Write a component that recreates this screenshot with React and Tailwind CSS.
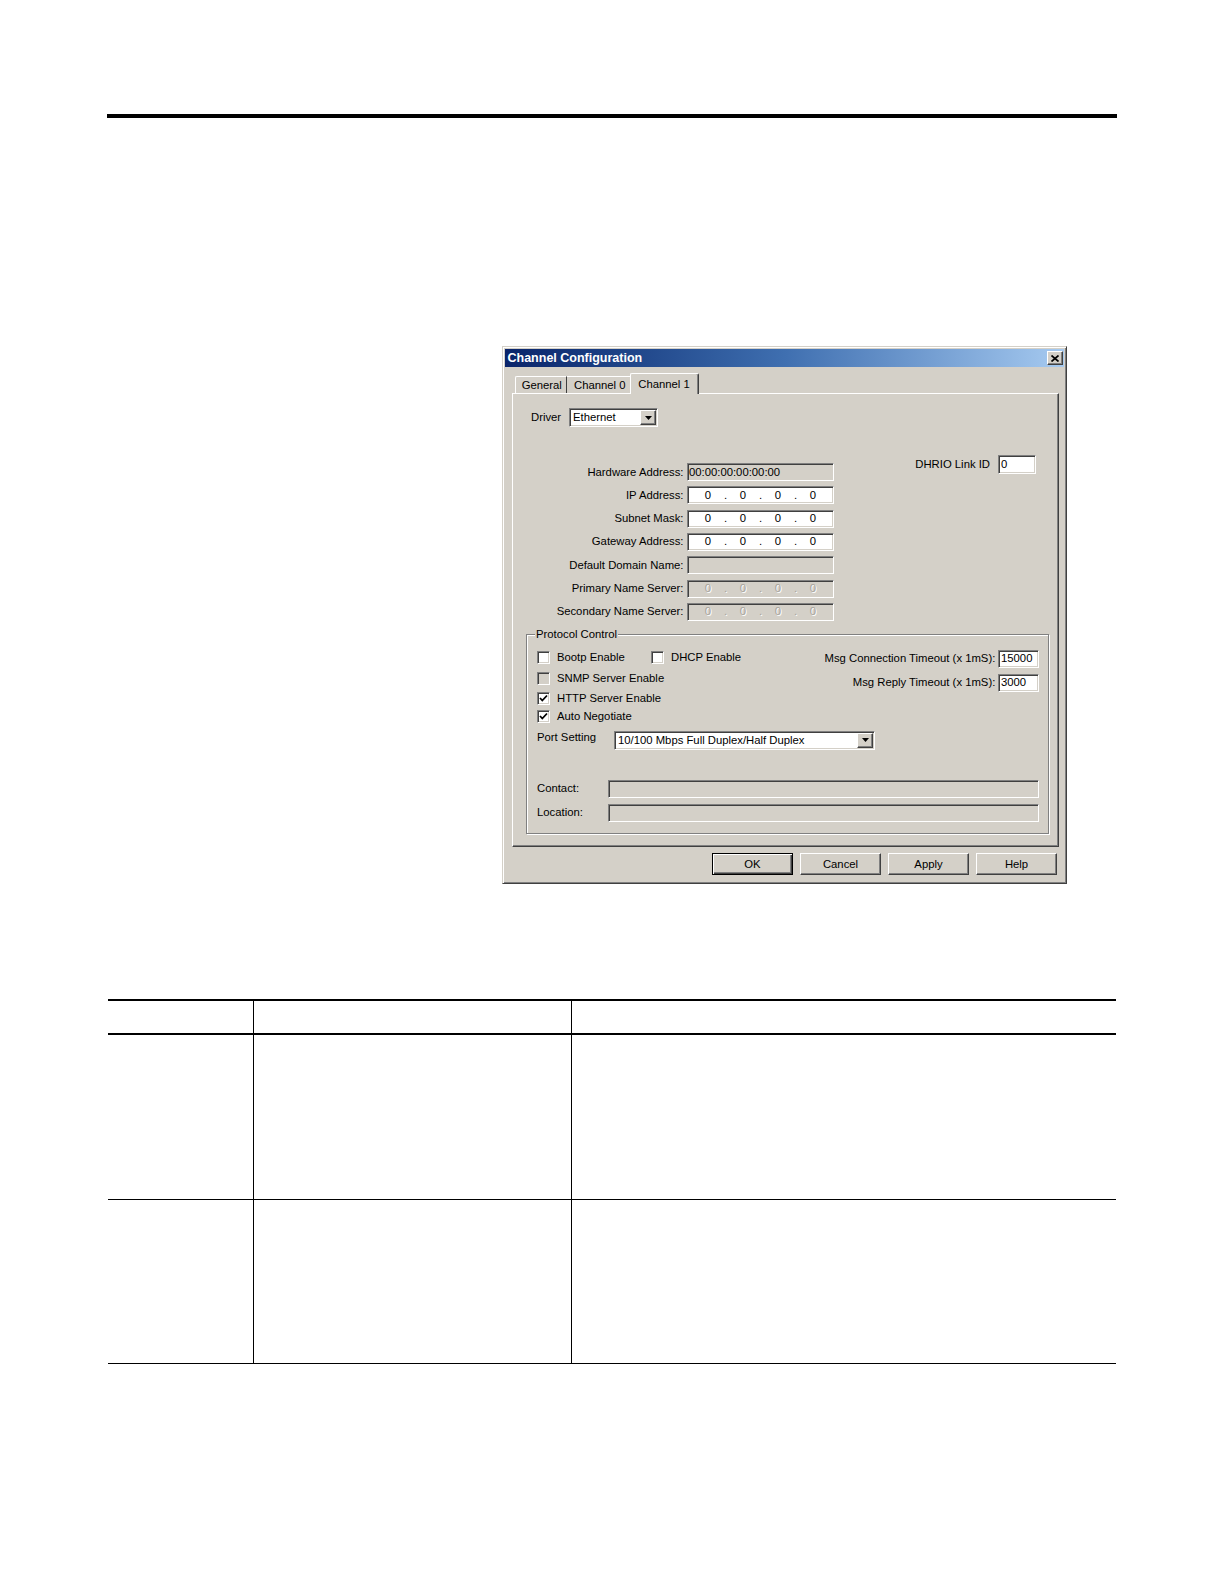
import React, { Fragment } from "react";

const sunken =
  "border border-t-[#808080] border-l-[#808080] border-b-white border-r-white shadow-[inset_1px_1px_0_#404040,inset_-1px_-1px_0_#d4d0c8]";
const raised =
  "border border-t-white border-l-white border-b-[#404040] border-r-[#404040] shadow-[inset_-1px_-1px_0_#808080]";

function Arrow() {
  return (
    <span className={`w-[16px] h-[15px] bg-[#d4d0c8] ${raised} flex items-center justify-center`}>
      <svg width="7" height="4" viewBox="0 0 7 4">
        <polygon points="0,0 7,0 3.5,4" fill="#000" />
      </svg>
    </span>
  );
}

function Select({ className, value }) {
  return (
    <div className={`${className} h-[19px] bg-white ${sunken} flex items-center justify-between pr-[1px]`}>
      <span className="pl-[3px]">{value}</span>
      <Arrow />
    </div>
  );
}

function IpValue({ disabled }) {
  const tone = disabled ? "text-[#a8a49c] [text-shadow:1px_1px_0_#fff]" : "text-[#000]";
  return (
    <div className={`flex pl-[9px] ${tone}`}>
      {[0, 1, 2, 3].map((i) => (
        <Fragment key={i}>
          {i > 0 && <span className="w-[13px] text-center">.</span>}
          <span className="w-[22px] text-center">0</span>
        </Fragment>
      ))}
    </div>
  );
}

function Check({ checked, disabled, label, className = "" }) {
  return (
    <div className={`flex items-center h-[16px] ${className}`}>
      <span
        className={`w-[13px] h-[13px] shrink-0 ${sunken} ${disabled ? "bg-[#d4d0c8]" : "bg-white"} flex items-center justify-center`}
      >
        {checked && (
          <svg width="9" height="9" viewBox="0 0 9 9">
            <path d="M1 4 L3.3 6.5 L8 1.5" stroke="#000" strokeWidth="1.8" fill="none" />
          </svg>
        )}
      </span>
      <span className="ml-[7px] whitespace-nowrap">{label}</span>
    </div>
  );
}

const rows = [
  { label: "Hardware Address:", gray: true, text: "00:00:00:00:00:00" },
  { label: "IP Address:", ip: true },
  { label: "Subnet Mask:", ip: true },
  { label: "Gateway Address:", ip: true },
  { label: "Default Domain Name:", gray: true },
  { label: "Primary Name Server:", ip: true, gray: true },
  { label: "Secondary Name Server:", ip: true, gray: true },
];

function Button({ children, primary }) {
  return (
    <button
      className={`w-[81px] h-[22px] bg-[#d4d0c8] flex items-center justify-center ${
        primary
          ? "border border-black shadow-[inset_1px_1px_0_#fff,inset_-1px_-1px_0_#404040,inset_-2px_-2px_0_#808080]"
          : raised
      }`}
    >
      {children}
    </button>
  );
}

function Dialog() {
  return (
    <div
      className={`ml-[502px] mt-[228px] w-[565px] h-[538px] bg-[#d4d0c8] p-[2px] border border-t-[#d4d0c8] border-l-[#d4d0c8] border-b-[#404040] border-r-[#404040] shadow-[inset_1px_1px_0_#fff,inset_-1px_-1px_0_#808080] text-[11.3px] leading-[13px] text-black`}
    >
      {/* title bar */}
      <div className="h-[18px] bg-gradient-to-r from-[#0a246a] via-[#3f6fb0] to-[#a6caf0] flex items-center justify-between">
        <span className="pl-[2.5px] text-white font-bold text-[12.5px]">Channel Configuration</span>
        <span className={`mr-[1px] w-[16px] h-[14px] bg-[#d4d0c8] ${raised} flex items-center justify-center`}>
          <svg width="8" height="7" viewBox="0 0 8 7">
            <path d="M0.5 0.5 L7.5 6.5 M7.5 0.5 L0.5 6.5" stroke="#000" strokeWidth="1.7" />
          </svg>
        </span>
      </div>

      {/* tabs */}
      <div className="mt-[6px] ml-[7px] pl-[3px] flex items-end h-[20px]">
        <div className="h-[17px] w-[52px] pl-[5.7px] flex items-center border-t border-l border-white border-r border-r-[#404040] rounded-tl-[2px]">
          General
        </div>
        <div className="h-[17px] w-[64px] pl-[7px] flex items-center border-t border-white">Channel 0</div>
        <div className="relative z-10 -ml-[1px] h-[21px] -mb-[1px] w-[69px] pl-[7.3px] flex items-center bg-[#d4d0c8] border-t border-l border-white border-r border-r-[#404040] shadow-[inset_-1px_0_0_#808080] rounded-t-[2px]">
          Channel 1
        </div>
      </div>

      {/* panel */}
      <div
        className={`ml-[7px] w-[547px] h-[454px] border border-t-white border-l-white border-b-[#404040] border-r-[#404040] shadow-[inset_-1px_-1px_0_#808080]`}
      >
        <div className="mt-[14px] pl-[18px] flex items-center h-[19px]">
          <span className="w-[38px]">Driver</span>
          <Select className="w-[89px]" value="Ethernet" />
        </div>

        <div className="flex items-start">
          <div className="mt-[36px] flex flex-col gap-[5.33px]">
            {rows.map((r) => (
              <div key={r.label} className="flex items-center h-[18px]">
                <span className="w-[174px] pr-[3.5px] text-right whitespace-nowrap">{r.label}</span>
                <div
                  className={`w-[147px] h-[18px] ${sunken} ${r.gray ? "bg-[#d4d0c8]" : "bg-white"} flex items-center`}
                >
                  {r.ip ? <IpValue disabled={r.gray} /> : <span className="pl-[1px]">{r.text}</span>}
                </div>
              </div>
            ))}
          </div>
          <div className="ml-auto mr-[22px] mt-[28px] flex items-center h-[19px]">
            <span className="mr-[8px]">DHRIO Link ID</span>
            <div className={`w-[38px] h-[19px] bg-white ${sunken} flex items-center pl-[2px]`}>0</div>
          </div>
        </div>

        <fieldset className="mt-[7px] ml-[13px] w-[523px] border border-[#808080] shadow-[1px_1px_0_#fff,inset_1px_1px_0_#fff] pl-[8px] pr-[9px] pb-[11px]">
          <legend className="px-[1px] bg-[#d4d0c8] leading-[13px]">Protocol Control</legend>
          <div className="pl-[2px]">
            <div className="flex items-start justify-between">
              <div className="pt-[9px] flex flex-col">
                <div className="flex">
                  <Check label="Bootp Enable" className="w-[114px]" />
                  <Check label="DHCP Enable" />
                </div>
                <Check label="SNMP Server Enable" disabled className="mt-[4.5px]" />
                <Check label="HTTP Server Enable" checked className="mt-[4.5px]" />
                <Check label="Auto Negotiate" checked className="mt-[2px]" />
              </div>
              <div className="pt-[9px] flex flex-col items-end gap-[6px]">
                <div className="flex items-center h-[18px]">
                  <span>Msg Connection Timeout (x 1mS):</span>
                  <div className={`ml-[2.7px] w-[41px] h-[18px] bg-white ${sunken} flex items-center pl-[2px]`}>
                    15000
                  </div>
                </div>
                <div className="flex items-center h-[18px]">
                  <span>Msg Reply Timeout (x 1mS):</span>
                  <div className={`ml-[2.7px] w-[41px] h-[18px] bg-white ${sunken} flex items-center pl-[2px]`}>
                    3000
                  </div>
                </div>
              </div>
            </div>

            <div className="mt-[6px] flex items-center h-[19px]">
              <span className="w-[77px] -mt-[5px]">Port Setting</span>
              <Select className="w-[261px]" value="10/100 Mbps Full Duplex/Half Duplex" />
            </div>

            <div className="mt-[30px] flex items-center h-[18px]">
              <span className="w-[71px]">Contact:</span>
              <div className={`flex-1 h-[18px] bg-[#d4d0c8] ${sunken}`} />
            </div>
            <div className="mt-[6px] flex items-center h-[18px]">
              <span className="w-[71px]">Location:</span>
              <div className={`flex-1 h-[18px] bg-[#d4d0c8] ${sunken}`} />
            </div>
          </div>
        </fieldset>
      </div>

      {/* buttons */}
      <div className="mt-[6px] pr-[7px] flex justify-end gap-[7px]">
        <Button primary>OK</Button>
        <Button>Cancel</Button>
        <Button>Apply</Button>
        <Button>Help</Button>
      </div>
    </div>
  );
}

function Table() {
  const head = ["", "", ""];
  return (
    <div className="mx-[108px] mt-[115px] grid grid-cols-[145px_318px_1fr] border-t-2 border-black">
      {head.map((h, i) => (
        <div key={"h" + i} className={`h-[34px] border-b-2 border-black ${i > 0 ? "border-l" : ""}`}>
          {h}
        </div>
      ))}
      {[0, 1, 2].map((i) => (
        <div key={"a" + i} className={`h-[165px] border-b border-black ${i > 0 ? "border-l" : ""}`} />
      ))}
      {[0, 1, 2].map((i) => (
        <div key={"b" + i} className={`h-[164px] border-b border-black ${i > 0 ? "border-l" : ""}`} />
      ))}
    </div>
  );
}

export default function App() {
  return (
    <div className="min-h-[1584px] bg-white pt-[114px] font-['Liberation_Sans',Arial,sans-serif]">
      <div className="mx-[107px] h-[4px] bg-black" />
      <Dialog />
      <Table />
    </div>
  );
}
